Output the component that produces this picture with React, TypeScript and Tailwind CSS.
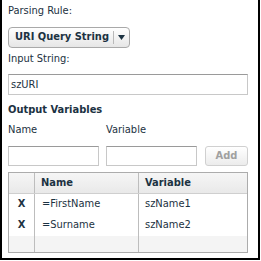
import { useState } from 'react'

const rows = [
	{ name: '=FirstName', variable: 'szName1' },
	{ name: '=Surname', variable: 'szName2' },
]

export default function App() {
	const [name, setName] = useState('')
	const [variable, setVariable] = useState('')

	return (
		<div
			className="w-[260px] h-[260px] bg-white border-2 border-t-0 border-black pl-[6px] pr-[10px] text-[11px] text-[#1c3242] flex flex-col"
			style={{ fontFamily: '"DejaVu Sans Condensed", "DejaVu Sans", sans-serif' }}>
			<div className="mt-[4px] leading-[14px]">Parsing Rule:</div>

			<button className="mt-[9px] h-[21px] w-[122px] flex items-center rounded-[4px] border border-[#a9a9a9] bg-gradient-to-b from-white to-[#e6e6e6] font-bold text-[#1c3242]">
				<span className="w-[104px] pl-[6px] text-left whitespace-nowrap">URI Query String</span>
				<span className="h-[13px] w-px bg-[#b9b9b9]" />
				<span className="flex-1 flex justify-center">
					<svg width="7" height="5" viewBox="0 0 7 5">
						<path d="M0 0h7L3.5 5z" fill="#1c3242" />
					</svg>
				</span>
			</button>

			<div className="mt-[4px] leading-[14px]">Input String:</div>
			<input
				className="mt-[8px] h-[21px] w-full border border-[#c8c8c8] border-t-[#9a9a9a] px-[2px] outline-none text-[#1c3242]"
				defaultValue="szURI"
			/>

			<div className="mt-[8px] leading-[14px] font-bold">Output Variables</div>

			<div className="mt-[6px] flex leading-[14px]">
				<span className="w-[98px]">Name</span>
				<span>Variable</span>
			</div>

			<div className="mt-[9px] flex items-center h-[20px]">
				<input
					className="h-[20px] w-[91px] border border-[#c8c8c8] border-t-[#9a9a9a] outline-none"
					value={name}
					onChange={(e) => setName(e.target.value)}
				/>
				<input
					className="ml-[7px] h-[20px] w-[91px] border border-[#c8c8c8] border-t-[#9a9a9a] outline-none"
					value={variable}
					onChange={(e) => setVariable(e.target.value)}
				/>
				<button
					disabled
					className="ml-auto h-[20px] w-[43px] rounded-[3px] border border-[#d0d0d0] bg-gradient-to-b from-white to-[#ececec] font-bold text-[#a0a0a0]">
					Add
				</button>
			</div>

			<div className="mt-[6px] h-[81px] border border-[#acacac] flex flex-col">
				<div className="grid grid-cols-[26px_104px_1fr] h-[21px] bg-gradient-to-b from-[#f6f6f6] to-[#e9e9e9] border-b border-[#cfcfcf] font-bold">
					<div className="border-r border-[#bdbdbd]" />
					<div className="border-r border-[#bdbdbd] pl-[6px] flex items-center">Name</div>
					<div className="pl-[6px] flex items-center">Variable</div>
				</div>
				{rows.map((r) => (
					<div key={r.variable} className="grid grid-cols-[26px_104px_1fr] h-[21px] bg-white">
						<div className="border-r border-[#bdbdbd] flex items-center justify-center font-bold">X</div>
						<div className="border-r border-[#bdbdbd] pl-[7px] flex items-center">{r.name}</div>
						<div className="pl-[6px] flex items-center">{r.variable}</div>
					</div>
				))}
				<div className="flex-1 grid grid-cols-[26px_104px_1fr] bg-[#f4f4f4]">
					<div className="border-r border-[#bdbdbd]" />
					<div className="border-r border-[#bdbdbd]" />
					<div />
				</div>
			</div>
		</div>
	)
}
